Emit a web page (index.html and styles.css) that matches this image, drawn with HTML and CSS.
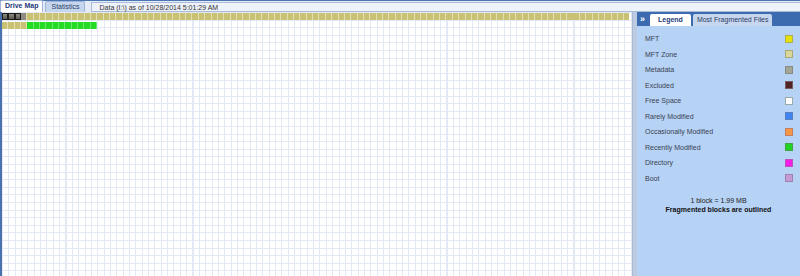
FILE: index.html
```html
<!DOCTYPE html>
<html>
<head>
<meta charset="utf-8">
<link rel="stylesheet" href="styles.css">
</head>
<body>
<div class="app">
  <div class="topbar">
    <div class="tabs">
      <div class="tab active">Drive Map</div>
      <div class="tab">Statistics</div>
    </div>
    <div class="info">Data (I:\) as of 10/28/2014 5:01:29 AM</div>
  </div>
  <div class="main">
    <div class="map">
      <div class="row row1">
        <div class="cell dark"></div><div class="cell dark"></div><div class="cell dark"></div><div class="cell grey"></div>
      </div>
      <div class="row row2">
        <div class="cell olive"></div><div class="cell olive"></div><div class="cell olive"></div><div class="cell olive"></div>
        <div class="cell green"></div><div class="cell green"></div><div class="cell green"></div><div class="cell green"></div>
        <div class="cell green"></div><div class="cell green"></div><div class="cell green"></div><div class="cell green"></div>
        <div class="cell green"></div><div class="cell green"></div><div class="cell green"></div>
      </div>
    </div>
    <div class="splitter"></div>
    <div class="side">
      <div class="sidehead">
        <span class="chev">»</span>
        <div class="stab active">Legend</div>
        <div class="stab">Most Fragmented Files</div>
      </div>
      <ul class="legend">
        <li><span>MFT</span><i class="sw mft"></i></li>
        <li><span>MFT Zone</span><i class="sw zone"></i></li>
        <li><span>Metadata</span><i class="sw meta"></i></li>
        <li><span>Excluded</span><i class="sw excl"></i></li>
        <li><span>Free Space</span><i class="sw free"></i></li>
        <li><span>Rarely Modified</span><i class="sw rare"></i></li>
        <li><span>Occasionally Modified</span><i class="sw occ"></i></li>
        <li><span>Recently Modified</span><i class="sw rec"></i></li>
        <li><span>Directory</span><i class="sw dir"></i></li>
        <li><span>Boot</span><i class="sw boot"></i></li>
      </ul>
      <div class="note">
        <div>1 block = 1.99 MB</div>
        <div class="bold">Fragmented blocks are outlined</div>
      </div>
    </div>
  </div>
</div>
</body>
</html>
```

FILE: styles.css
```css
* { box-sizing: border-box; margin: 0; padding: 0; }
html, body { width: 800px; height: 276px; overflow: hidden; }
body {
  font-family: "Liberation Sans", Arial, sans-serif;
  font-size: 7px;
  color: #3a3a3a;
  background: #fff;
}
.app { display: flex; flex-direction: column; height: 276px; }
.topbar {
  height: 12px;
  display: flex;
  align-items: flex-end;
  background: #e6ecf7;
  border-top: 1px solid #4a74b2;
}
.tabs { display: flex; gap: 2px; align-items: flex-end; height: 11px; }
.tab {
  height: 11px;
  line-height: 10px;
  padding: 0 5px;
  background: #c6d6ee;
  color: #2a3c66;
  border: 1px solid #9fb4d6;
  border-bottom: none;
  border-radius: 2px 2px 0 0;
}
.tab.active {
  background: #fff;
  color: #1e3a7a;
  font-weight: bold;
  height: 12px;
  margin-top: -1px;
  padding: 0 4px;
}
.info {
  margin-left: 6px;
  flex: 1;
  height: 10px;
  line-height: 9px;
  padding-left: 7px;
  align-self: center;
  background: #eef2fa;
  border: 1px solid #a9bbd8;
  border-right: none;
  color: #333;
}
.main { flex: 1; display: flex; }
.map {
  width: 632px;
  border-left: 2px solid #4a72ae;
  padding-top: 1px;
  display: flex;
  flex-direction: column;
  gap: 1px;
  background-color: #fff;
  background-image:
    repeating-linear-gradient(to right, #e2e9f5 0 1px, transparent 1px 6.35px),
    repeating-linear-gradient(to bottom, #e2e9f5 0 1px, transparent 1px 7.6px);
}
.row { height: 7px; display: flex; }
.row1 {
  background-image: repeating-linear-gradient(to right, #c9c173 0 5.35px, #e3dfb0 5.35px 6.35px);
  margin-right: 3px;
}
.row2 { margin-top: 1px; }
.cell { width: 6.35px; height: 100%; border-right: 1px solid #e3dfb0; }
.cell.dark { border: 1px solid #1c1c1c; background: linear-gradient(#8a8a80, #5a5a50); }
.cell.grey { background: #8c8c80; }
.cell.olive { background: #c9c173; }
.cell.green { background: #25dc25; border-right-color: #6be86b; }
.splitter {
  width: 5px;
  background: #bccbe2;
  border-left: 1px solid #a8b9d4;
}
.side {
  flex: 1;
  background: #b6d2f5;
  display: flex;
  flex-direction: column;
}
.sidehead {
  height: 14px;
  display: flex;
  align-items: flex-end;
  background: #3d6bb0;
  padding-left: 3px;
  gap: 2px;
}
.chev {
  color: #fff;
  font-weight: bold;
  font-size: 9px;
  align-self: center;
  width: 8px;
}
.stab {
  height: 12px;
  line-height: 11px;
  padding: 0 4px;
  background: #c6d6ee;
  color: #2a3c66;
  border-radius: 2px 2px 0 0;
}
.stab.active { background: #fff; font-weight: bold; color: #1e3a7a; padding: 0 8px; }
.legend {
  list-style: none;
  padding: 5px 7px 0 8px;
  display: flex;
  flex-direction: column;
}
.legend li {
  height: 15.5px;
  display: flex;
  align-items: center;
  justify-content: space-between;
  color: #3a3f52;
}
.sw {
  width: 8px;
  height: 8px;
  border: 1px solid #9a9a9a;
  display: block;
}
.mft { background: #e4e20a; border-color: #b0ae50; }
.zone { background: #d9d79a; border-color: #a8a87a; }
.meta { background: #a5a596; border-color: #8a8a80; }
.excl { background: #4e2424; border-color: #7a5a5a; }
.free { background: #fff; border-color: #9aa; }
.rare { background: #3f84f0; border-color: #5a80c0; }
.occ { background: #f59546; border-color: #c08060; }
.rec { background: #22d422; border-color: #4aa04a; }
.dir { background: #f21ee6; border-color: #c050c0; }
.boot { background: #c598d6; border-color: #a080b0; }
.note {
  margin-top: 10px;
  text-align: center;
  color: #222;
  line-height: 9px;
}
.note .bold { font-weight: bold; color: #111; }
```
